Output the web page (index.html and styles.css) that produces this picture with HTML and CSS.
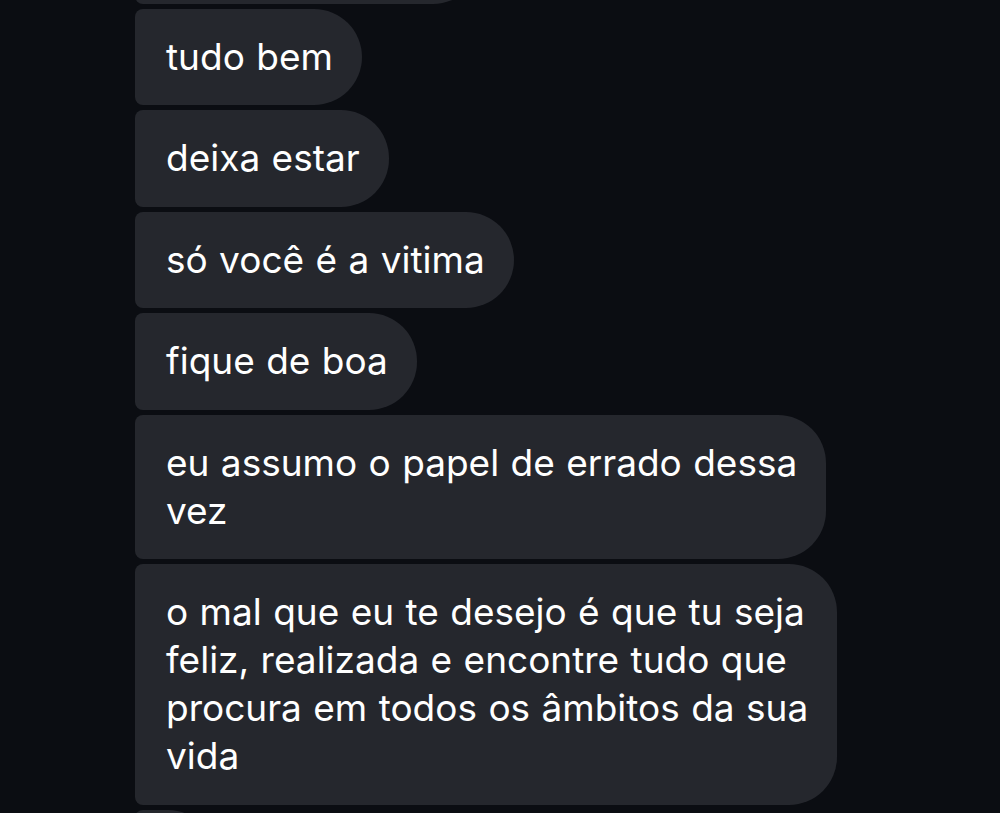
FILE: index.html
```html
<!DOCTYPE html>
<html>
<head>
    <title>Mensagens</title>
    <link rel="stylesheet" href="styles.css">
</head>
<body>
    <div class="thread">
        <div class="bubble cut-top"></div>
        <div class="bubble">tudo bem</div>
        <div class="bubble">deixa estar</div>
        <div class="bubble">só você é a vitima</div>
        <div class="bubble">fique de boa</div>
        <div class="bubble">eu assumo o papel de errado dessa<br>vez</div>
        <div class="bubble">o mal que eu te desejo é que tu seja<br>feliz, realizada e encontre tudo que<br>procura em todos os âmbitos da sua<br>vida</div>
        <div class="bubble cut-bottom"></div>
    </div>
</body>
</html>
```

FILE: styles.css
```css
body {
    margin: 0;
    background-color: #0b0d12;
    font-family: Inter, "Liberation Sans", sans-serif;
    overflow: hidden;
}
.thread {
    display: flex;
    flex-direction: column;
    align-items: flex-start;
    gap: 5px;
    padding-left: 135px;
    margin-top: -93px;
}
.bubble {
    background-color: #25272d;
    color: #fff;
    font-size: 37px;
    line-height: 48px;
    word-spacing: 1px;
    padding: 24px 29px 24.5px 31px;
    border-radius: 8px 48px 48px 8px;
    white-space: nowrap;
}
.cut-top {
    width: 286px;
    height: 48px;
}
.cut-bottom {
    width: 21px;
    height: 48px;
}
```
